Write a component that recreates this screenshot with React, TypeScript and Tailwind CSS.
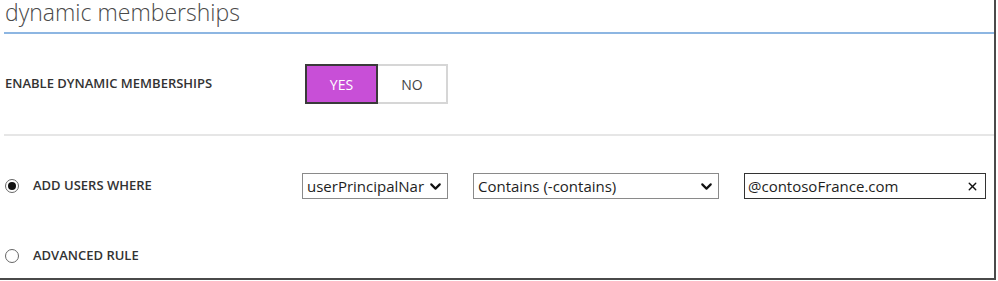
import { ChevronDown, X } from "lucide-react";

const font = { fontFamily: '"Open Sans", "Noto Sans", sans-serif' };

function Radio({ checked }: { checked?: boolean }) {
  return (
    <span className="flex h-[14px] w-[14px] shrink-0 items-center justify-center rounded-full border border-[#666] bg-white">
      {checked && <span className="h-[8px] w-[8px] rounded-full bg-[#111]" />}
    </span>
  );
}

function FakeSelect({ value, width }: { value: string; width: string }) {
  return (
    <div
      className={`flex h-[26px] items-center justify-between border border-[#8a8a8a] bg-white pl-[4px] pr-[3px] text-[15px] text-[#1e1e1e] ${width}`}
    >
      <span className="whitespace-nowrap leading-[20px]">{value}</span>
      <ChevronDown className="h-[17px] w-[17px] shrink-0 text-[#111]" strokeWidth={3} />
    </div>
  );
}

export default function App() {
  return (
    <div style={font} className="h-[281px] w-[998px] bg-white">
      <div className="flex h-[280px] w-[996px] flex-col border-r-2 border-b-2 border-[#4a4a4a] bg-white">
        {/* titulo */}
        <div className="h-[32px] pl-[5px]">
          <h1 className="text-[23px] font-light leading-[25px] text-[#4a4a4a]">dynamic memberships</h1>
        </div>
        <div className="ml-[4px] h-[2px] bg-[#8db6e2]" />

        {/* habilitar */}
        <div className="flex h-[100px] items-center pl-[5px]">
          <span className="w-[300px] text-[13px] font-semibold text-[#333]">ENABLE DYNAMIC MEMBERSHIPS</span>
          <div className="flex h-[40px] text-[14px]">
            <button className="flex w-[73px] items-center justify-center border-2 border-[#3a3a3a] bg-[#c84fd7] text-white">
              YES
            </button>
            <button className="flex w-[70px] items-center justify-center border-2 border-l-0 border-[#d6d6d6] bg-white text-[#444]">
              NO
            </button>
          </div>
        </div>
        <div className="ml-[4px] h-[2px] bg-[#e6e6e6]" />

        {/* reglas */}
        <div className="flex h-[100px] items-center pl-[5px]">
          <Radio checked />
          <span className="ml-[14px] w-[269px] text-[13px] font-semibold text-[#333]">ADD USERS WHERE</span>
          <div className="flex items-center gap-[25px]">
            <FakeSelect value="userPrincipalNar" width="w-[146px]" />
            <FakeSelect value="Contains (-contains)" width="w-[246px]" />
            <div className="flex h-[26px] w-[242px] items-center justify-between border border-[#333] bg-white pl-[3px] pr-[6px] text-[15px] text-[#1e1e1e]">
              <span className="leading-[20px]">@contosoFrance.com</span>
              <X className="h-[13px] w-[13px] text-[#111]" strokeWidth={2.5} />
            </div>
          </div>
        </div>

        <div className="flex h-[40px] items-center pl-[5px]">
          <Radio />
          <span className="ml-[14px] text-[13px] font-semibold text-[#333]">ADVANCED RULE</span>
        </div>
      </div>
    </div>
  );
}
